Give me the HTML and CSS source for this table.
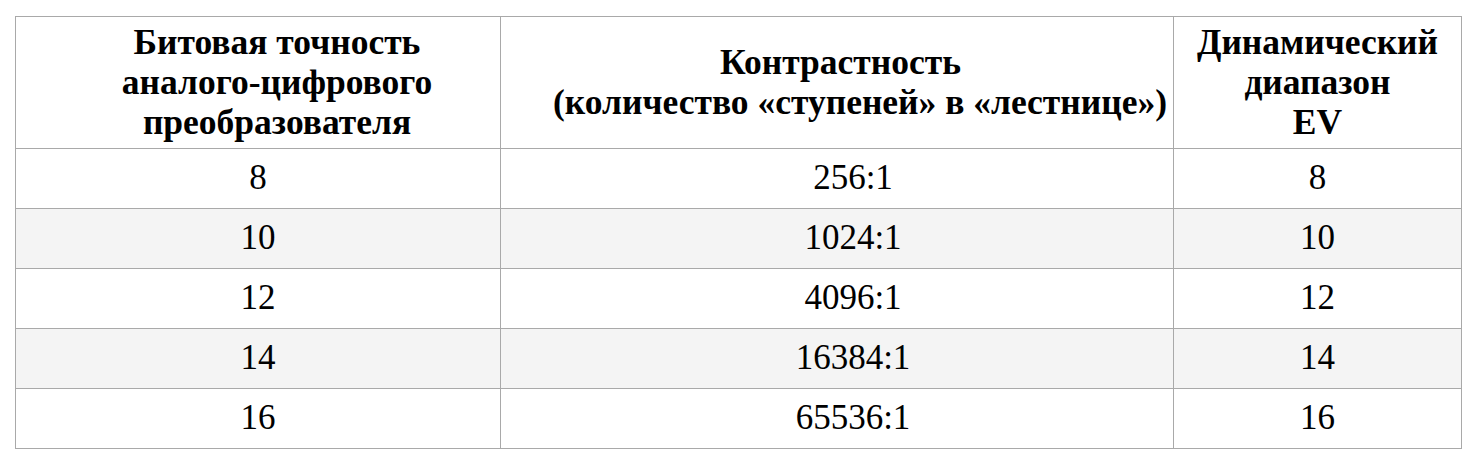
FILE: index.html
```html
<!DOCTYPE html>
<html lang="ru">
<head>
<meta charset="utf-8">
<title>Битовая точность</title>
<link rel="stylesheet" href="styles.css">
</head>
<body>
<table class="data">
  <colgroup>
    <col class="c1">
    <col class="c2">
    <col class="c3">
  </colgroup>
  <thead>
    <tr>
      <th class="h1">Битовая точность<br>аналого-цифрового<br>преобразователя</th>
      <th class="h2"><span class="line a">Контрастность</span><span class="line b">(количество «ступеней» в «лестнице»)</span></th>
      <th class="h3">Динамический<br>диапазон<br>EV</th>
    </tr>
  </thead>
  <tbody>
    <tr><td>8</td><td class="mid">256:1</td><td>8</td></tr>
    <tr class="alt"><td>10</td><td class="mid">1024:1</td><td>10</td></tr>
    <tr><td>12</td><td class="mid">4096:1</td><td>12</td></tr>
    <tr class="alt"><td>14</td><td class="mid">16384:1</td><td>14</td></tr>
    <tr><td>16</td><td class="mid">65536:1</td><td>16</td></tr>
  </tbody>
</table>
</body>
</html>
```
FILE: styles.css
```css
html, body {
  margin: 0;
  padding: 0;
  background: #ffffff;
}
body {
  padding: 16px 0 0 15px;
  font-family: "Liberation Serif", "Times New Roman", serif;
  color: #000000;
}
.data {
  border-collapse: collapse;
  table-layout: fixed;
  width: 1446px;
  font-size: 35px;
  line-height: 40px;
}
.c1 { width: 485px; }
.c2 { width: 673px; }
.c3 { width: 288px; }
.data th,
.data td {
  border: 1px solid #a9a9a9;
  text-align: center;
  vertical-align: middle;
  padding: 9px 4px 10px;
}
.data td.mid {
  padding-left: 36px;
}
.data th {
  font-weight: bold;
  font-size: 35.5px;
  padding: 5px 4px 6px;
  white-space: nowrap;
}
.data th.h1 {
  padding-left: 42px;
}
.data th.h2 {
  padding-left: 0;
  padding-right: 0;
}
.line {
  display: block;
}
.line.a {
  padding-left: 7px;
}
.line.b {
  padding-left: 46px;
}
.data tr.alt td {
  background: #f4f4f4;
}
```
